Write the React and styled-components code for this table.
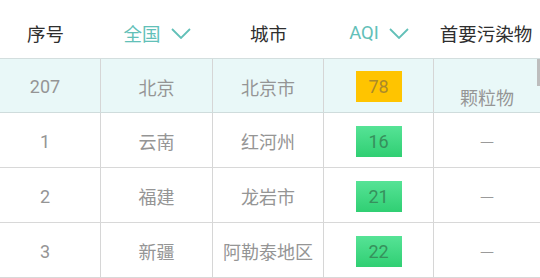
import React from "react";
import styled, { createGlobalStyle, css } from "styled-components";

const Global = createGlobalStyle`
  html, body { margin: 0; padding: 0; background: #ffffff; }
  body { font-family: Roboto, "Noto Sans CJK SC", sans-serif; }
`;

const COLS = "101px 112px 111px 110px 1fr";

const Page = styled.div`
  position: relative;
  width: 540px;
  height: 278px;
  overflow: hidden;
  background: #fff;
`;

const HeaderRow = styled.div`
  display: grid;
  grid-template-columns: ${COLS};
  height: 59px;
  box-sizing: border-box;
  border-bottom: 1px solid #d3dede;
`;

const HeadCell = styled.div`
  display: flex;
  align-items: center;
  justify-content: center;
  gap: 10px;
  padding-top: 8px;
  padding-right: ${(p) => p.$shift || 0}px;
  font-size: 18.5px;
  color: ${(p) => (p.$accent ? "#62c0b8" : "#2e2e2e")};
`;

const Row = styled.div`
  display: grid;
  grid-template-columns: ${COLS};
  height: ${(p) => (p.$highlight ? 54 : 55)}px;
  box-sizing: border-box;
  background: ${(p) => (p.$highlight ? "#e9f8f8" : "#fff")};
  border-bottom: 1px solid ${(p) => (p.$highlight ? "#cfdcdc" : "#d8d8d8")};
`;

const Cell = styled.div`
  display: flex;
  align-items: center;
  justify-content: center;
  box-sizing: border-box;
  border-right: 1px solid #d6d6d6;
  font-size: 18px;
  color: #959595;
  padding-top: ${(p) => p.$drop || 2}px;
  padding-right: ${(p) => p.$shift || 0}px;
  &:last-child { border-right: none; }
`;

const Badge = styled.div`
  width: 46px;
  height: 31px;
  display: flex;
  align-items: center;
  justify-content: center;
  font-size: 18px;
  ${(p) =>
    p.$level === "moderate"
      ? css`
          background: #ffc400;
          color: #ab8a2a;
        `
      : css`
          background: linear-gradient(#56e396, #30cf73);
          color: #36905c;
        `}
`;

const Dash = styled.span`
  font-family: "DejaVu Sans", sans-serif;
  font-size: 14px;
  color: #9a9a9a;
`;

const Scrollbar = styled.div`
  position: absolute;
  right: 0;
  top: 59px;
  width: 3px;
  height: 27px;
  background: #bdbdbd;
`;

const Chevron = () => (
  <svg width="20" height="11" viewBox="0 0 20 11" fill="none">
    <polyline points="1,1 10,10 19,1" stroke="#62c0b8" strokeWidth="1.8" />
  </svg>
);

const rows = [
  { no: "207", prov: "北京", city: "北京市", aqi: 78, level: "moderate", pol: "颗粒物", highlight: true },
  { no: "1", prov: "云南", city: "红河州", aqi: 16, level: "good", pol: null },
  { no: "2", prov: "福建", city: "龙岩市", aqi: 21, level: "good", pol: null },
  { no: "3", prov: "新疆", city: "阿勒泰地区", aqi: 22, level: "good", pol: null },
];

export default function App() {
  return (
    <Page>
      <Global />
      <HeaderRow>
        <HeadCell $shift={10}>序号</HeadCell>
        <HeadCell $accent $shift={-8}>
          全国 <Chevron />
        </HeadCell>
        <HeadCell>城市</HeadCell>
        <HeadCell $accent $shift={-6}>
          AQI <Chevron />
        </HeadCell>
        <HeadCell $shift={2}>首要污染物</HeadCell>
      </HeaderRow>
      {rows.map((r) => (
        <Row key={r.no} $highlight={r.highlight}>
          <Cell $shift={10}>{r.no}</Cell>
          <Cell>{r.prov}</Cell>
          <Cell>{r.city}</Cell>
          <Cell>
            <Badge $level={r.level}>{r.aqi}</Badge>
          </Cell>
          <Cell $drop={r.pol ? 22 : 2}>{r.pol ? r.pol : <Dash>—</Dash>}</Cell>
        </Row>
      ))}
      <Scrollbar />
    </Page>
  );
}
